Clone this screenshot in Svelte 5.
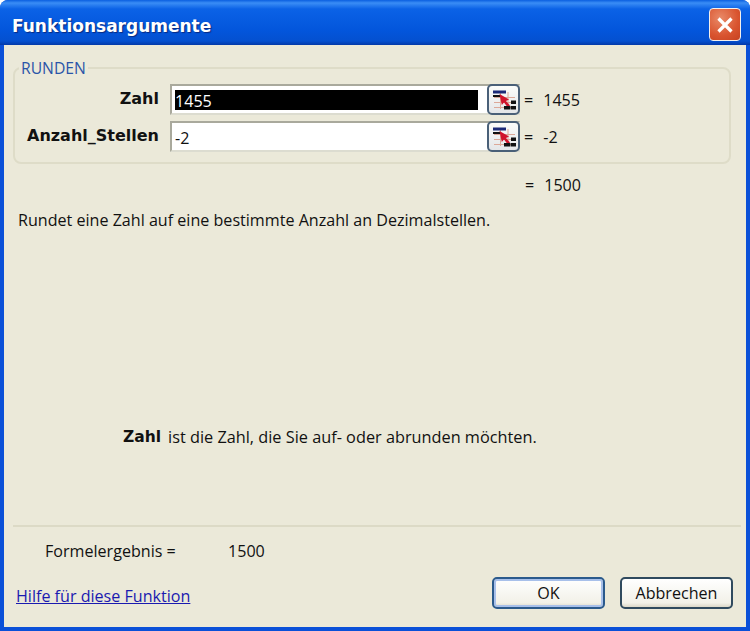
<script lang="ts">
  // Excel-Dialog "Funktionsargumente" im XP-Luna-Stil.
  const args = [
    { name: "Zahl", value: "1455", selected: true },
    { name: "Anzahl_Stellen", value: "-2", selected: false },
  ];
</script>

{#snippet pickIcon()}
  <svg width="26" height="22" viewBox="0 0 26 22" aria-hidden="true">
    <path d="M3 8.5H24M3 13.5H24M3 18.5H24M9.5 3V20M17 3V20" stroke="#dca898" stroke-width="1" fill="none" />
    <rect x="2" y="1.5" width="13" height="3" fill="#1c2a78" />
    <rect x="2" y="6" width="8" height="2" fill="#111" />
    <path d="M8.5 5L18 10.5L15 12L19 16.5L16.6 18.2L13 13.6L10.8 16Z" fill="#d0142c" />
    <rect x="20" y="11.5" width="5" height="3.5" fill="#111" />
    <rect x="13" y="17" width="6.5" height="3.5" fill="#111" />
    <rect x="20" y="17" width="5" height="3.5" fill="#111" />
  </svg>
{/snippet}

<div class="window">
  <header class="titlebar">
    <span class="title">Funktionsargumente</span>
    <button class="close" aria-label="Schließen">
      <svg width="20" height="20" viewBox="0 0 20 20" aria-hidden="true">
        <path d="M3.5 3.5L16.5 16.5M16.5 3.5L3.5 16.5" stroke="#fff" stroke-width="3.2" fill="none" />
      </svg>
    </button>
  </header>

  <main class="body">
    <fieldset class="group">
      <legend>RUNDEN</legend>
      {#each args as a (a.name)}
        <div class="arg">
          <span class="argname">{a.name}</span>
          <div class="field">
            <span class="fieldtext" class:selected={a.selected}>{a.value}</span>
            <button class="pick" aria-label="Zelle wählen">{@render pickIcon()}</button>
          </div>
          <span class="argvalue"><span class="eq">=</span>{a.value}</span>
        </div>
      {/each}
    </fieldset>

    <div class="result"><span class="eq">=</span>1500</div>
    <p class="desc">Rundet eine Zahl auf eine bestimmte Anzahl an Dezimalstellen.</p>
    <p class="argdesc"><b>Zahl</b><span>ist die Zahl, die Sie auf- oder abrunden möchten.</span></p>

    <hr />

    <div class="formula">
      <span class="flabel">Formelergebnis =</span>
      <span>1500</span>
    </div>

    <footer class="foot">
      <a href="#hilfe">Hilfe für diese Funktion</a>
      <div class="buttons">
        <button class="btn default">OK</button>
        <button class="btn">Abbrechen</button>
      </div>
    </footer>
  </main>
</div>

<style>
  :global(body) {
    margin: 0;
    background: #fff;
  }
  .window {
    width: 750px;
    height: 631px;
    box-sizing: border-box;
    display: flex;
    flex-direction: column;
    font-family: "Open Sans", "DejaVu Sans", sans-serif;
    font-size: 16.1px;
    color: #111;
    border-radius: 8px 8px 0 0;
    overflow: hidden;
    background: #0a50d8;
  }
  .titlebar {
    flex: none;
    height: 45px;
    box-sizing: border-box;
    padding: 4px 9px 0 12px;
    display: flex;
    align-items: center;
    justify-content: space-between;
    background: linear-gradient(180deg, #0a5fe0 0, #3a8df5 3px, #0b62e6 9px, #0356dc 30px, #0450d0 41px, #0339a8 45px);
  }
  .title {
    margin-top: 2px;
    color: #fff;
    font-family: "DejaVu Sans", sans-serif;
    font-weight: 700;
    font-size: 17px;
    text-shadow: 1px 1px 1px #0a2a80;
  }
  .close {
    appearance: none;
    width: 32px;
    height: 33px;
    padding: 0;
    display: flex;
    align-items: center;
    justify-content: center;
    border: 1px solid #f4f0ec;
    border-radius: 4px;
    background: radial-gradient(circle at 35% 30%, #e98a68, #d9542f 60%, #c64120);
  }
  .body {
    flex: 1;
    min-height: 0;
    margin: 0 4px 4px 4px;
    padding: 0 15px 0 9px;
    background: #ebe9d9;
    display: flex;
    flex-direction: column;
  }
  .group {
    margin: 13px 0 0;
    height: 106px;
    box-sizing: border-box;
    padding: 0;
    border: 2px solid #dedcc8;
    border-radius: 8px;
    min-width: 0;
  }
  legend {
    margin-left: 4px;
    padding: 0 2px;
    color: #2a55a8;
    font-size: 15.7px;
    line-height: 20px;
  }
  .arg {
    display: grid;
    grid-template-columns: 150px 351px 1fr;
    column-gap: 4px;
    align-items: center;
    height: 31px;
    margin-bottom: 6px;
  }
  .arg:first-of-type {
    margin-top: 6px;
  }
  .argname {
    margin-bottom: 3px;
    font-family: "DejaVu Sans", sans-serif;
    font-weight: 700;
    font-size: 16px;
    text-align: right;
    padding-right: 6px;
  }
  .field {
    margin-left: 1px;
    height: 31px;
    box-sizing: border-box;
    border: 2px solid #a9a99c;
    border-right-color: #dcdcd0;
    border-bottom-color: #dcdcd0;
    background: #fff;
    display: flex;
    align-items: center;
    padding-left: 3px;
  }
  .fieldtext {
    flex: 1;
    height: 20px;
    margin-top: 1px;
    line-height: 23px;
    margin-right: 9px;
  }
  .fieldtext.selected {
    background: #000;
    color: #fff;
  }
  .pick {
    appearance: none;
    flex: none;
    width: 33px;
    height: 31px;
    margin-right: -2px;
    padding: 0;
    display: flex;
    align-items: center;
    justify-content: center;
    background: linear-gradient(180deg, #fbfcfa, #e4e6e8);
    border: 2px solid #4a6078;
    border-radius: 5px;
  }
  .eq {
    margin-right: 10px;
  }
  .result {
    margin: 10px 0 0 512px;
    line-height: 22px;
  }
  .desc {
    margin: 13px 0 0 5px;
    line-height: 22px;
  }
  .argdesc {
    margin: 195px 0 0 110px;
    line-height: 22px;
    display: flex;
    gap: 7px;
  }
  .argdesc b {
    font-family: "DejaVu Sans", sans-serif;
    font-size: 15.5px;
  }
  .argdesc span {
    font-size: 16.3px;
  }
  hr {
    align-self: stretch;
    box-sizing: border-box;
    margin: 77px -10px 0 0;
    border: none;
    border-top: 2px solid #dcdac6;
    height: 0;
  }
  .formula {
    margin: 13px 0 0 32px;
    display: flex;
    line-height: 22px;
  }
  .flabel {
    width: 183px;
  }
  .foot {
    margin: 15px -2px 0 0;
    display: flex;
    justify-content: space-between;
    align-items: flex-end;
  }
  a {
    margin-left: 3px;
    margin-bottom: 2px;
    color: #1a1ab0;
    text-decoration: underline;
    line-height: 22px;
  }
  .buttons {
    display: flex;
    gap: 15px;
  }
  .btn {
    appearance: none;
    height: 32px;
    width: 113px;
    padding: 0;
    font: inherit;
    color: #111;
    background: linear-gradient(180deg, #ffffff, #f2f1e8 85%, #dcd8c8);
    border: 2px solid #2f4a5e;
    border-radius: 5px;
  }
  .btn.default {
    border-color: #2b5a8c;
    box-shadow: inset 0 0 0 2px #a8c0ea;
  }
</style>
